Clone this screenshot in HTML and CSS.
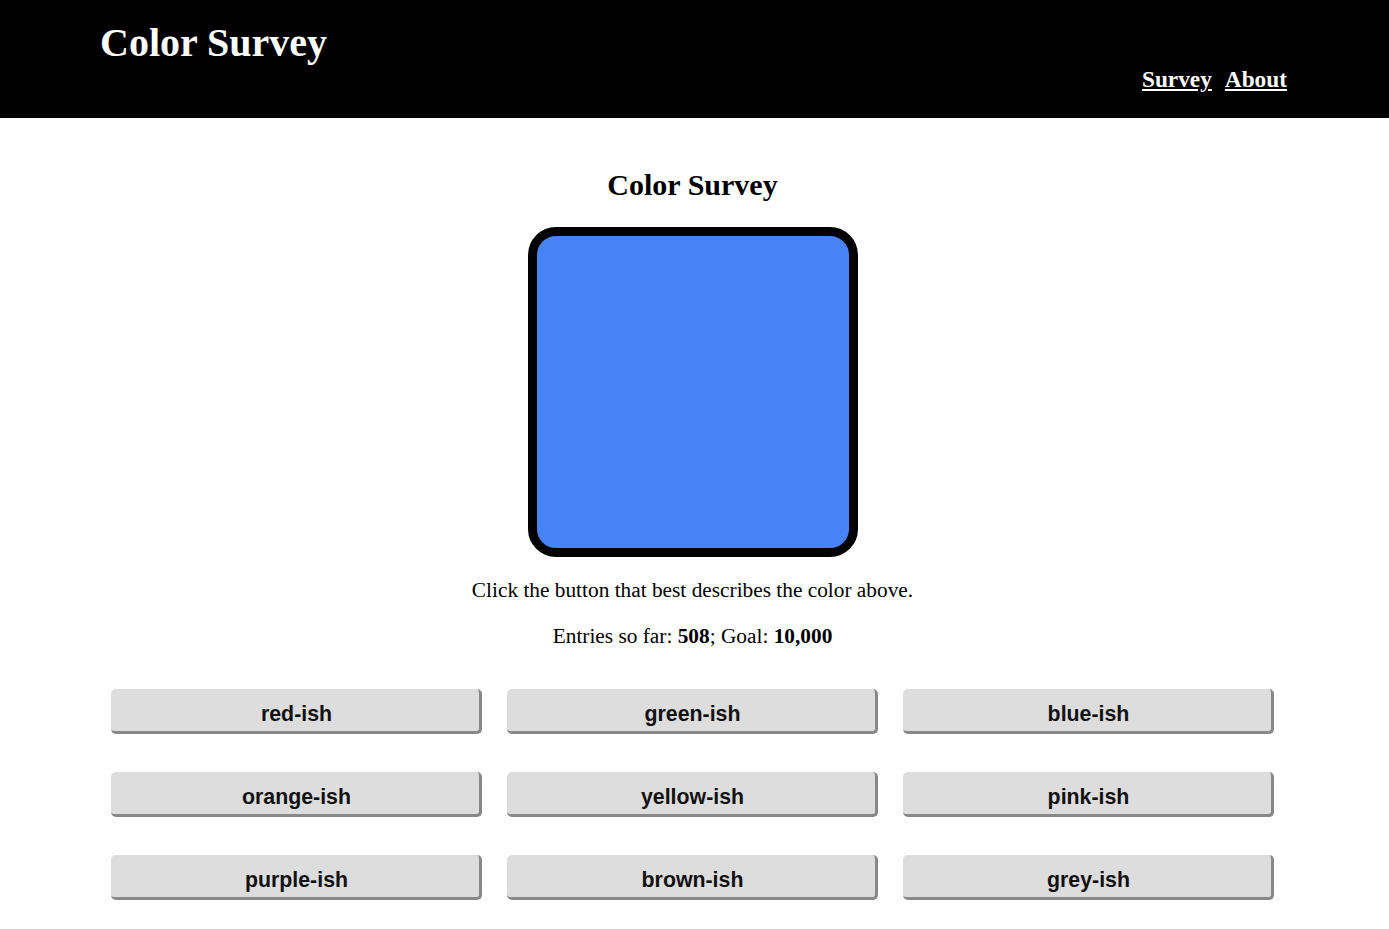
FILE: index.html
```html
<!DOCTYPE html>
<html>
<head>
<meta charset="utf-8">
<title>Color Survey</title>
<link rel="stylesheet" href="styles.css">
</head>
<body>
<header class="site-header">
  <h1 class="site-title">Color Survey</h1>
  <nav class="site-nav">
    <a href="#">Survey</a>
    <a href="#">About</a>
  </nav>
</header>
<main class="survey">
  <h2 class="survey-title">Color Survey</h2>
  <div class="swatch"></div>
  <p class="instructions">Click the button that best describes the color above.</p>
  <p class="progress">Entries so far: <b>508</b>; Goal: <b>10,000</b></p>
  <div class="choices">
    <button class="choice">red-ish</button>
    <button class="choice">green-ish</button>
    <button class="choice">blue-ish</button>
    <button class="choice">orange-ish</button>
    <button class="choice">yellow-ish</button>
    <button class="choice">pink-ish</button>
    <button class="choice">purple-ish</button>
    <button class="choice">brown-ish</button>
    <button class="choice">grey-ish</button>
  </div>
</main>
</body>
</html>
```

FILE: styles.css
```css
html, body {
  margin: 0;
  padding: 0;
  background: #fff;
  color: #000;
  font-family: "Liberation Serif", "Times New Roman", serif;
}

.site-header {
  background: #000;
  color: #fff;
  height: 118px;
  box-sizing: border-box;
  padding: 0 102px 0 100px;
  display: flex;
  justify-content: space-between;
  align-items: flex-start;
}

.site-title {
  margin: 19px 0 0;
  font-size: 40px;
  font-weight: bold;
  line-height: normal;
}

.site-nav {
  margin-top: 66px;
  font-size: 23.3px;
  font-weight: bold;
  line-height: normal;
  display: flex;
  gap: 13px;
}

.site-nav a {
  color: #fff;
  text-decoration: underline;
}

.survey {
  display: flex;
  flex-direction: column;
  align-items: center;
  padding: 50px 4px 0 0;
}

.survey-title {
  margin: 0;
  font-size: 30px;
  font-weight: bold;
  line-height: normal;
}

.swatch {
  margin-top: 25px;
  width: 330px;
  height: 330px;
  box-sizing: border-box;
  border: 9px solid #000;
  border-radius: 28px;
  background: #4783f6;
}

.instructions {
  margin: 21px 0 0;
  font-size: 21.33px;
  line-height: 25px;
}

.progress {
  margin: 21px 0 0;
  font-size: 21.33px;
  line-height: 25px;
}

.choices {
  margin-top: 40px;
  width: 1163px;
  display: grid;
  grid-template-columns: repeat(3, 1fr);
  column-gap: 25px;
  row-gap: 38px;
}

.choice {
  height: 45px;
  box-sizing: border-box;
  margin: 0;
  padding: 9px 0 0 3px;
  background: #dddddd;
  border: 0;
  border-right: 3px solid #888;
  border-bottom: 3px solid #888;
  border-radius: 5px;
  font-family: "Liberation Sans", Arial, sans-serif;
  font-weight: bold;
  font-size: 21.33px;
  color: #111;
  cursor: pointer;
}
```
